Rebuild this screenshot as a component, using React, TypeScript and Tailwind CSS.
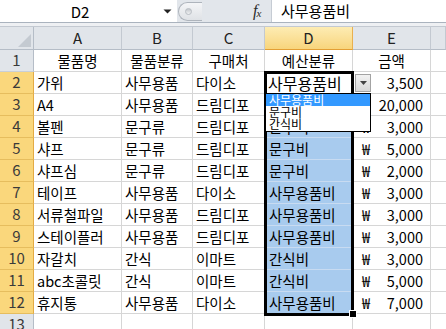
import React from "react";

const rows: string[][] = [
  ["물품명", "물품분류", "구매처", "예산분류", "금액"],
  ["가위", "사무용품", "다이소", "사무용품비", "3,500"],
  ["A4", "사무용품", "드림디포", "사무용품비", "20,000"],
  ["볼펜", "문구류", "드림디포", "문구비", "3,000"],
  ["샤프", "문구류", "드림디포", "문구비", "5,000"],
  ["샤프심", "문구류", "드림디포", "문구비", "2,000"],
  ["테이프", "사무용품", "다이소", "사무용품비", "3,000"],
  ["서류철파일", "사무용품", "드림디포", "사무용품비", "3,000"],
  ["스테이플러", "사무용품", "드림디포", "사무용품비", "3,000"],
  ["자갈치", "간식", "이마트", "간식비", "3,000"],
  ["abc초콜릿", "간식", "이마트", "간식비", "5,000"],
  ["휴지통", "사무용품", "다이소", "사무용품비", "7,000"],
  ["", "", "", "", ""],
];

const colHeaders = ["A", "B", "C", "D", "E", ""];

function RowHeader({ n }: { n: number }) {
  const sel = n >= 2 && n <= 12;
  return (
    <div
      className={
        sel
          ? "h-[22px] flex items-center justify-center bg-[#fad77c] border-r border-r-[#e3ab45] border-b border-b-[#e6bd5e] text-[15px] text-[#3a3a3a]"
          : "h-[22px] flex items-center justify-center bg-[#e1e5ea] border-r border-r-[#b5bdc7] border-b border-b-[#c9cfd6] text-[15px] text-[#3a3a3a]"
      }
    >
      {n}
    </div>
  );
}

function DataRow({ cells, n }: { cells: string[]; n: number }) {
  const isHead = n === 1;
  const dBlue = n >= 3 && n <= 12;
  return (
    <>
      <RowHeader n={n} />
      {cells.slice(0, 3).map((c, i) => (
        <div
          key={i}
          className={
            isHead
              ? "h-[22px] flex items-center justify-center border-r border-b border-[#d6d6d6] whitespace-nowrap overflow-hidden text-[14.5px] text-black"
              : "h-[22px] flex items-center pl-[3px] border-r border-b border-[#d6d6d6] whitespace-nowrap overflow-hidden text-[14.5px] text-black"
          }
        >
          {c}
        </div>
      ))}
      <div
        className={
          isHead
            ? "h-[22px] flex items-center justify-center border-r border-b border-[#d6d6d6] whitespace-nowrap overflow-hidden text-[14.5px] text-black"
            : dBlue
            ? "h-[22px] flex items-center pl-[4px] bg-[#a8cbee] border-r border-r-[#d6d6d6] border-b border-b-[#c8dbf1] whitespace-nowrap overflow-hidden text-[14.5px] text-black"
            : n === 2
            ? "h-[22px] flex items-center pl-[3px] border-r border-b border-[#d6d6d6] whitespace-nowrap overflow-hidden text-[16px] text-black"
            : "h-[22px] flex items-center pl-[3px] border-r border-b border-[#d6d6d6] whitespace-nowrap overflow-hidden text-[14.5px] text-black"
        }
      >
        {cells[3]}
      </div>
      {isHead ? (
        <div className="h-[22px] flex items-center justify-center border-r border-b border-[#d6d6d6] text-[14.5px] text-black">
          {cells[4]}
        </div>
      ) : (
        <div className="h-[22px] flex items-center justify-between pl-[9px] pr-[7px] border-r border-b border-[#d6d6d6] whitespace-nowrap text-[14.5px] text-black">
          <span>{cells[4] ? "₩" : ""}</span>
          <span>{cells[4]}</span>
        </div>
      )}
      <div className="h-[22px] border-b border-[#d6d6d6]" />
    </>
  );
}

export default function App() {
  return (
    <div className="relative w-[446px] h-[329px] overflow-hidden bg-white font-['Noto_Sans_CJK_KR',sans-serif]">
      {/* formula bar */}
      <div className="flex h-[23px] border-b border-[#aab3be]">
        <div className="w-[177px] bg-white flex items-center">
          <div className="w-[160px] text-center text-[15px] text-black leading-none">D2</div>
          <svg width="9" height="5" viewBox="0 0 9 5" className="ml-[3px]">
            <path d="M0.5 0.5 L8.5 0.5 L4.5 4.5 Z" fill="#222" />
          </svg>
        </div>
        <div className="w-[94px] bg-[#e2e6eb] flex items-center">
          <div className="ml-[1px] w-[24px] h-[19px] rounded-l-full border border-r-0 border-[#aeb4bc] bg-gradient-to-b from-[#f4f5f7] to-[#dfe2e6] flex items-center pl-[6px]">
            <div className="w-[7px] h-[7px] rounded-full bg-gradient-to-b from-[#c3c7cc] to-[#f0f1f3] border border-[#b8bdc3]" />
          </div>
          <div className="ml-[51px] font-['Liberation_Serif',serif] italic text-[#2a2a2a] leading-none flex items-end">
            <span className="text-[16px]">f</span>
            <span className="text-[11px] -ml-[1px]">x</span>
          </div>
        </div>
        <div className="flex-1 bg-white border-l border-[#c6ccd4] flex items-center pl-[9px] text-[15px] text-black">
          사무용품비
        </div>
      </div>
      <div className="h-[4px] bg-[#eef0f3] border-b border-[#c3c9d1]" />

      {/* grid */}
      <div className="grid grid-cols-[34px_88px_71px_72px_88px_78px_1fr]">
        <div className="h-[23px] bg-[#e1e5ea] border-r border-b border-[#b5bdc7] flex items-end justify-end pr-[2px] pb-[2px]">
          <svg width="13" height="13" viewBox="0 0 13 13">
            <path d="M13 0 L13 13 L0 13 Z" fill="#c4cad1" />
          </svg>
        </div>
        {colHeaders.map((h, i) =>
          h === "D" ? (
            <div
              key={i}
              className="h-[23px] flex items-center justify-center bg-gradient-to-b from-[#fdecb3] to-[#f8d57c] border-r border-r-[#e9b04f] border-b border-b-[#e39f35] text-[15px] text-[#222]"
            >
              {h}
            </div>
          ) : (
            <div
              key={i}
              className="h-[23px] flex items-center justify-center bg-[#e1e5ea] border-r border-r-[#c3c9d1] border-b border-b-[#b5bdc7] text-[15px] text-[#222]"
            >
              {h}
            </div>
          )
        )}
        {rows.map((r, i) => (
          <DataRow key={i} cells={r} n={i + 1} />
        ))}
      </div>

      {/* selection outline */}
      <div className="absolute left-[264px] top-[71px] w-[90px] h-[245px] border-[3px] border-black pointer-events-none" />
      <div className="absolute left-[349px] top-[310px] w-[8px] h-[8px] bg-black border border-white" />

      {/* dropdown button */}
      <div className="absolute left-[355px] top-[74px] w-[16px] h-[18px] border border-[#a3a3a3] bg-gradient-to-b from-[#f2f2f2] to-[#d9d9d9] flex items-center justify-center">
        <svg width="7" height="4" viewBox="0 0 7 4">
          <path d="M0 0 L7 0 L3.5 4 Z" fill="#444" />
        </svg>
      </div>

      {/* dropdown list */}
      <div className="absolute left-[265px] top-[93px] w-[106px] h-[39px] bg-white border border-black flex flex-col">
        <div className="h-[12px] leading-[12px] text-[12px] bg-[#3399ff] text-white pl-[3px] overflow-visible whitespace-nowrap">
          사무용품비
        </div>
        <div className="h-[12px] leading-[12px] text-[12px] text-black pl-[3px] whitespace-nowrap">문구비</div>
        <div className="h-[12px] leading-[12px] text-[12px] text-black pl-[3px] whitespace-nowrap">간식비</div>
      </div>
    </div>
  );
}
